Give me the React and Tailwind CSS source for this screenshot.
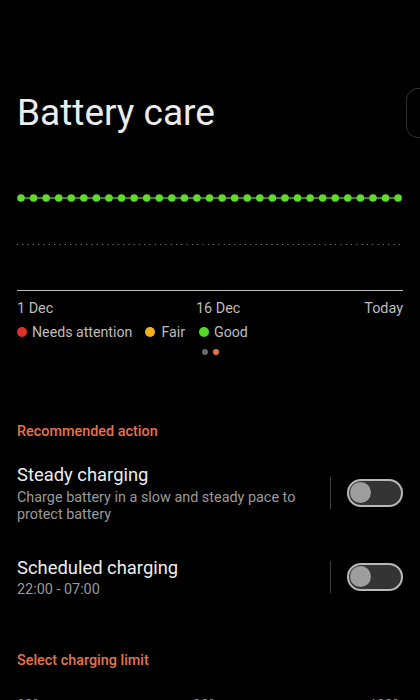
import { useState } from 'react';

const dotXs = Array.from({ length: 31 }, (_, i) => 4 + i * 12.57);

function Toggle({ on, onChange }) {
  return (
    <div className="flex items-center gap-4">
      <div className="w-[1.5px] h-8 bg-[#3f3f3f]" />
      <button
        onClick={onChange}
        className="w-14 h-7 rounded-full border-2 border-[#b8b8b8] bg-[#343434] flex items-center px-[1px]"
      >
        <span
          className={
            on
              ? 'w-[21px] h-[21px] rounded-full bg-[#e5744d] ml-auto'
              : 'w-[21px] h-[21px] rounded-full bg-[#9e9e9e]'
          }
        />
      </button>
    </div>
  );
}

function Setting({ title, sub, on, onChange, className }) {
  return (
    <div className={`flex items-center justify-between ${className}`}>
      <div className="flex-1 pr-6">
        <p className="text-[18.4px] leading-6 text-[#ededed]">{title}</p>
        <p className="mt-[1.5px] text-[14.4px] leading-[17px] text-[#9a9a9a]">{sub}</p>
      </div>
      <Toggle on={on} onChange={onChange} />
    </div>
  );
}

export default function App() {
  const [steady, setSteady] = useState(false);
  const [scheduled, setScheduled] = useState(false);

  return (
    <div
      className="relative w-[420px] h-[700px] overflow-hidden bg-black px-[17px] pt-[91px]"
      style={{ fontFamily: 'Roboto, "Noto Sans", sans-serif' }}
    >
      {/* next card peeking in */}
      <div className="absolute left-[406px] top-[88px] w-8 h-[50px] rounded-l-xl border border-[#333]" />

      <h1 className="text-[37px] leading-[44px] text-[#ececec]">Battery care</h1>

      {/* chart */}
      <svg width="386" height="156" className="block">
        <line x1="4" y1="63" x2="381" y2="63" stroke="#4fb625" strokeWidth="1.5" />
        {dotXs.map((x) => (
          <circle key={x} cx={x} cy="63" r="3.8" fill="#5fdb2b" />
        ))}
        <line x1="0" y1="109.5" x2="383" y2="109.5" stroke="#7a7a7a" strokeWidth="1" strokeDasharray="1.2 4.1" />
        <line x1="0" y1="155.5" x2="386" y2="155.5" stroke="#bdbdbd" strokeWidth="1" />
      </svg>

      <div className="mt-[8px] flex text-[14.4px] leading-5 text-[#bdbdbd]">
        <span className="w-[179px]">1 Dec</span>
        <span>16 Dec</span>
        <span className="ml-auto">Today</span>
      </div>

      <div className="mt-[3px] flex items-center text-[14.2px] leading-5 text-[#bdbdbd]">
        <span className="w-[10px] h-[10px] rounded-full bg-[#e0302e]" />
        <span className="ml-[5px]">Needs attention</span>
        <span className="ml-[13px] w-[10px] h-[10px] rounded-full bg-[#f4b11b]" />
        <span className="ml-[6px]">Fair</span>
        <span className="ml-[14px] w-[10px] h-[10px] rounded-full bg-[#52dc26]" />
        <span className="ml-[5px]">Good</span>
      </div>

      <div className="mt-[7px] flex justify-center gap-[5px]">
        <span className="w-[6px] h-[6px] rounded-full bg-[#6a6a6a]" />
        <span className="w-[6px] h-[6px] rounded-full bg-[#e5744d]" />
      </div>

      <p className="mt-[67px] text-[14.4px] leading-5 font-medium text-[#e5744d]">Recommended action</p>

      <Setting
        className="mt-[21px]"
        title="Steady charging"
        sub="Charge battery in a slow and steady pace to protect battery"
        on={steady}
        onChange={() => setSteady(!steady)}
      />

      <Setting
        className="mt-[33px]"
        title="Scheduled charging"
        sub="22:00 - 07:00"
        on={scheduled}
        onChange={() => setScheduled(!scheduled)}
      />

      <p className="mt-[53px] text-[14.4px] leading-5 font-medium text-[#e5744d]">Select charging limit</p>

      <div className="mt-6 flex justify-between text-[14px] leading-5 text-[#9a9a9a]">
        <span>80%</span>
        <span>90%</span>
        <span>100%</span>
      </div>
    </div>
  );
}
